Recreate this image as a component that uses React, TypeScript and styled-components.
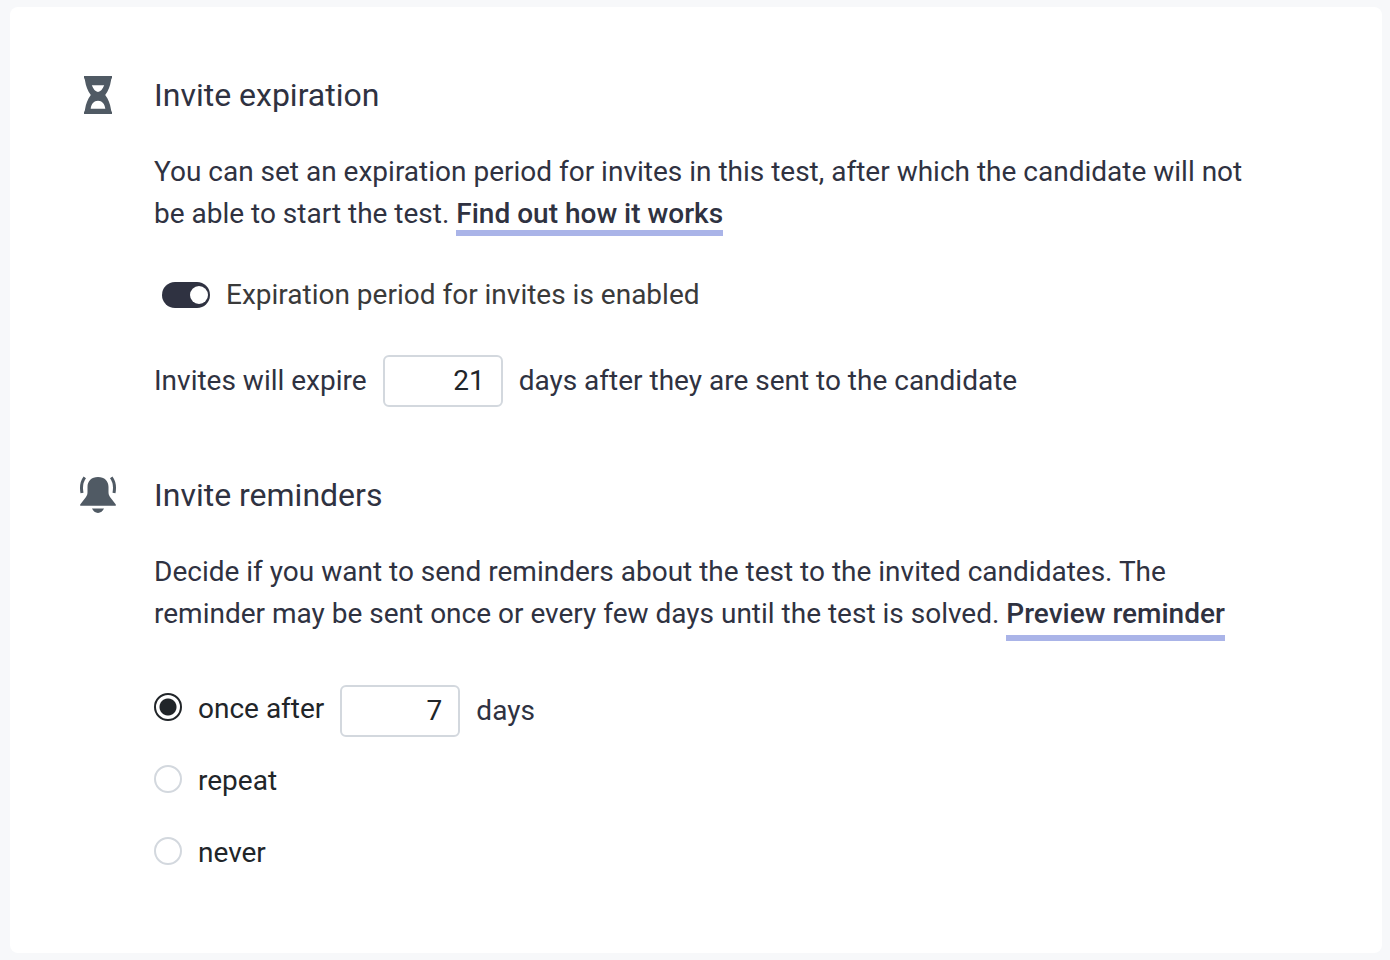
import React, { useState } from "react";
import styled, { createGlobalStyle } from "styled-components";

const ink = "#2f3241";
const line = "#d3d8de";

const GlobalStyle = createGlobalStyle`
  *, *::before, *::after { box-sizing: border-box; }
  body {
    margin: 0;
    background: #f7f8fa;
    color: ${ink};
    font-family: Roboto, "Liberation Sans", sans-serif;
    font-size: 28px;
    line-height: 42px;
  }
`;

const Card = styled.main`
  display: flex;
  flex-direction: column;
  gap: 64px;
  margin: 7px 8px 7px 10px;
  padding: 64px 120px 52px 70px;
  border-radius: 8px;
  background: #fff;
`;

const Section = styled.section`
  display: grid;
  grid-template-columns: 36px minmax(0, 1fr);
  column-gap: 38px;
`;

const IconCell = styled.div`
  display: flex;
  align-items: center;
  height: 48px;
`;

const Title = styled.h2`
  margin: 0 0 32px;
  font-size: 32px;
  font-weight: 400;
  line-height: 48px;
`;

const Text = styled.p`
  margin: 0;
`;

const HelpLink = styled.a`
  border-bottom: 6px solid #aab4e8;
  color: inherit;
  font-weight: 500;
  text-decoration: none;
`;

const PreviewButton = styled.button`
  padding: 0;
  border: 0;
  border-bottom: 6px solid #aab4e8;
  background: none;
  color: inherit;
  font: inherit;
  font-weight: 500;
  cursor: pointer;
`;

const SwitchLabel = styled.label`
  display: flex;
  align-items: center;
  gap: 16px;
  margin: 39px 0;
  padding-left: 8px;
  color: #3a3a3a;
`;

const Switch = styled.input`
  display: flex;
  align-items: center;
  width: 48px;
  height: 26px;
  margin: 0;
  padding: 0 2px;
  border-radius: 13px;
  appearance: none;
  background: #a5abb5;

  &::before {
    content: "";
    width: 18px;
    height: 18px;
    border-radius: 50%;
    background: #fff;
  }

  &:checked {
    justify-content: flex-end;
    background: ${ink};
  }
`;

const FieldRow = styled.div`
  display: flex;
  align-items: center;
  gap: 16px;
`;

const DaysInput = styled.input`
  width: 120px;
  height: 52px;
  padding: 0 16px 2px;
  border: 2px solid ${line};
  border-radius: 6px;
  background: #fff;
  color: #212529;
  font: inherit;
  text-align: right;
`;

const Options = styled.fieldset`
  min-width: 0;
  margin: 44px 0 0;
  padding: 0;
  border: 0;
`;

const Option = styled.div`
  display: flex;
  align-items: flex-start;
  gap: 16px;
  min-height: 72px;
`;

const OptionLabel = styled.label`
  display: flex;
  gap: 16px;
  padding-top: 3px;
  color: #212529;
`;

const Radio = styled.input`
  width: 28px;
  height: 28px;
  margin: 5px 0 0;
  border: 2px solid ${line};
  border-radius: 50%;
  appearance: none;
  background: #fff;

  &:checked {
    border-color: #212529;
    background: radial-gradient(circle, #212529 0 8px, #fff 9px);
  }
`;

const Unit = styled.span`
  line-height: 52px;
`;

const HourglassIcon = () => (
  <svg width="36" height="40" viewBox="0 0 36 40" fill="#505a64" aria-hidden="true">
    <path
      fillRule="evenodd"
      d="M4 1H32V3C31.400 3.500 31.300 4 31 5.500C30 11.500 28.500 15.500 25.200 20C28.500 24.500 30 28.500 31 34.500C31.300 36 31.400 36.500 32 37V39H4V37C4.600 36.500 4.700 36 5 34.500C6 28.500 7.500 24.500 10.800 20C7.500 15.500 6 11.500 5 5.500C4.700 4 4.600 3.500 4 3ZM11.800 10.300C13.300 14 15.300 16.800 18 17C20.700 16.800 22.700 14 24.200 10.300ZM10.700 33.700H25.300C24.800 29 22 25.800 18 25.800C14 25.800 11.200 29 10.700 33.700Z"
    />
  </svg>
);

const BellIcon = () => (
  <svg width="36" height="40" viewBox="0 0 36 40" fill="#505a64" aria-hidden="true">
    <path d="M18 2C11.500 2 7.500 6 7.500 12V17C7.500 19 7 20.500 6 22L.2 29.600V30.700H35.800V29.600L30 22C29 20.500 28.500 19 28.500 17V12C28.500 6 24.500 2 18 2ZM12 33.500H24C22.800 36.300 20.700 37.900 18 37.900C15.300 37.900 13.200 36.300 12 33.500Z" />
    <path d="M4.800 2.300C1.200 7 .9 12 2 18M31.200 2.300C34.800 7 35.100 12 34 18" fill="none" stroke="#505a64" strokeWidth="3" />
  </svg>
);

export default function App() {
  const [enabled, setEnabled] = useState(true);
  const [expireDays, setExpireDays] = useState("21");
  const [remindDays, setRemindDays] = useState("7");
  const [mode, setMode] = useState("once");

  return (
    <>
      <GlobalStyle />
      <Card>
        <Section>
          <IconCell><HourglassIcon /></IconCell>
          <div>
            <Title>Invite expiration</Title>
            <Text>
              You can set an expiration period for invites in this test, after which the candidate will not
              be able to start the test. <HelpLink href="#how-it-works">Find out how it works</HelpLink>
            </Text>
            <SwitchLabel>
              <Switch type="checkbox" role="switch" checked={enabled} onChange={(e) => setEnabled(e.target.checked)} />
              Expiration period for invites is enabled
            </SwitchLabel>
            <FieldRow>
              <label htmlFor="expire-days">Invites will expire</label>
              <DaysInput id="expire-days" inputMode="numeric" value={expireDays} onChange={(e) => setExpireDays(e.target.value)} />
              <span>days after they are sent to the candidate</span>
            </FieldRow>
          </div>
        </Section>
        <Section>
          <IconCell><BellIcon /></IconCell>
          <div>
            <Title>Invite reminders</Title>
            <Text>
              Decide if you want to send reminders about the test to the invited candidates. The
              reminder may be sent once or every few days until the test is solved.{" "}
              <PreviewButton type="button">Preview reminder</PreviewButton>
            </Text>
            <Options aria-label="Reminder frequency">
              <Option>
                <OptionLabel>
                  <Radio type="radio" name="mode" checked={mode === "once"} onChange={() => setMode("once")} />
                  once after
                </OptionLabel>
                <DaysInput
                  aria-label="Days before the reminder"
                  inputMode="numeric"
                  value={remindDays}
                  onChange={(e) => setRemindDays(e.target.value)}
                />
                <Unit>days</Unit>
              </Option>
              <Option>
                <OptionLabel>
                  <Radio type="radio" name="mode" checked={mode === "repeat"} onChange={() => setMode("repeat")} />
                  repeat
                </OptionLabel>
              </Option>
              <Option>
                <OptionLabel>
                  <Radio type="radio" name="mode" checked={mode === "never"} onChange={() => setMode("never")} />
                  never
                </OptionLabel>
              </Option>
            </Options>
          </div>
        </Section>
      </Card>
    </>
  );
}
